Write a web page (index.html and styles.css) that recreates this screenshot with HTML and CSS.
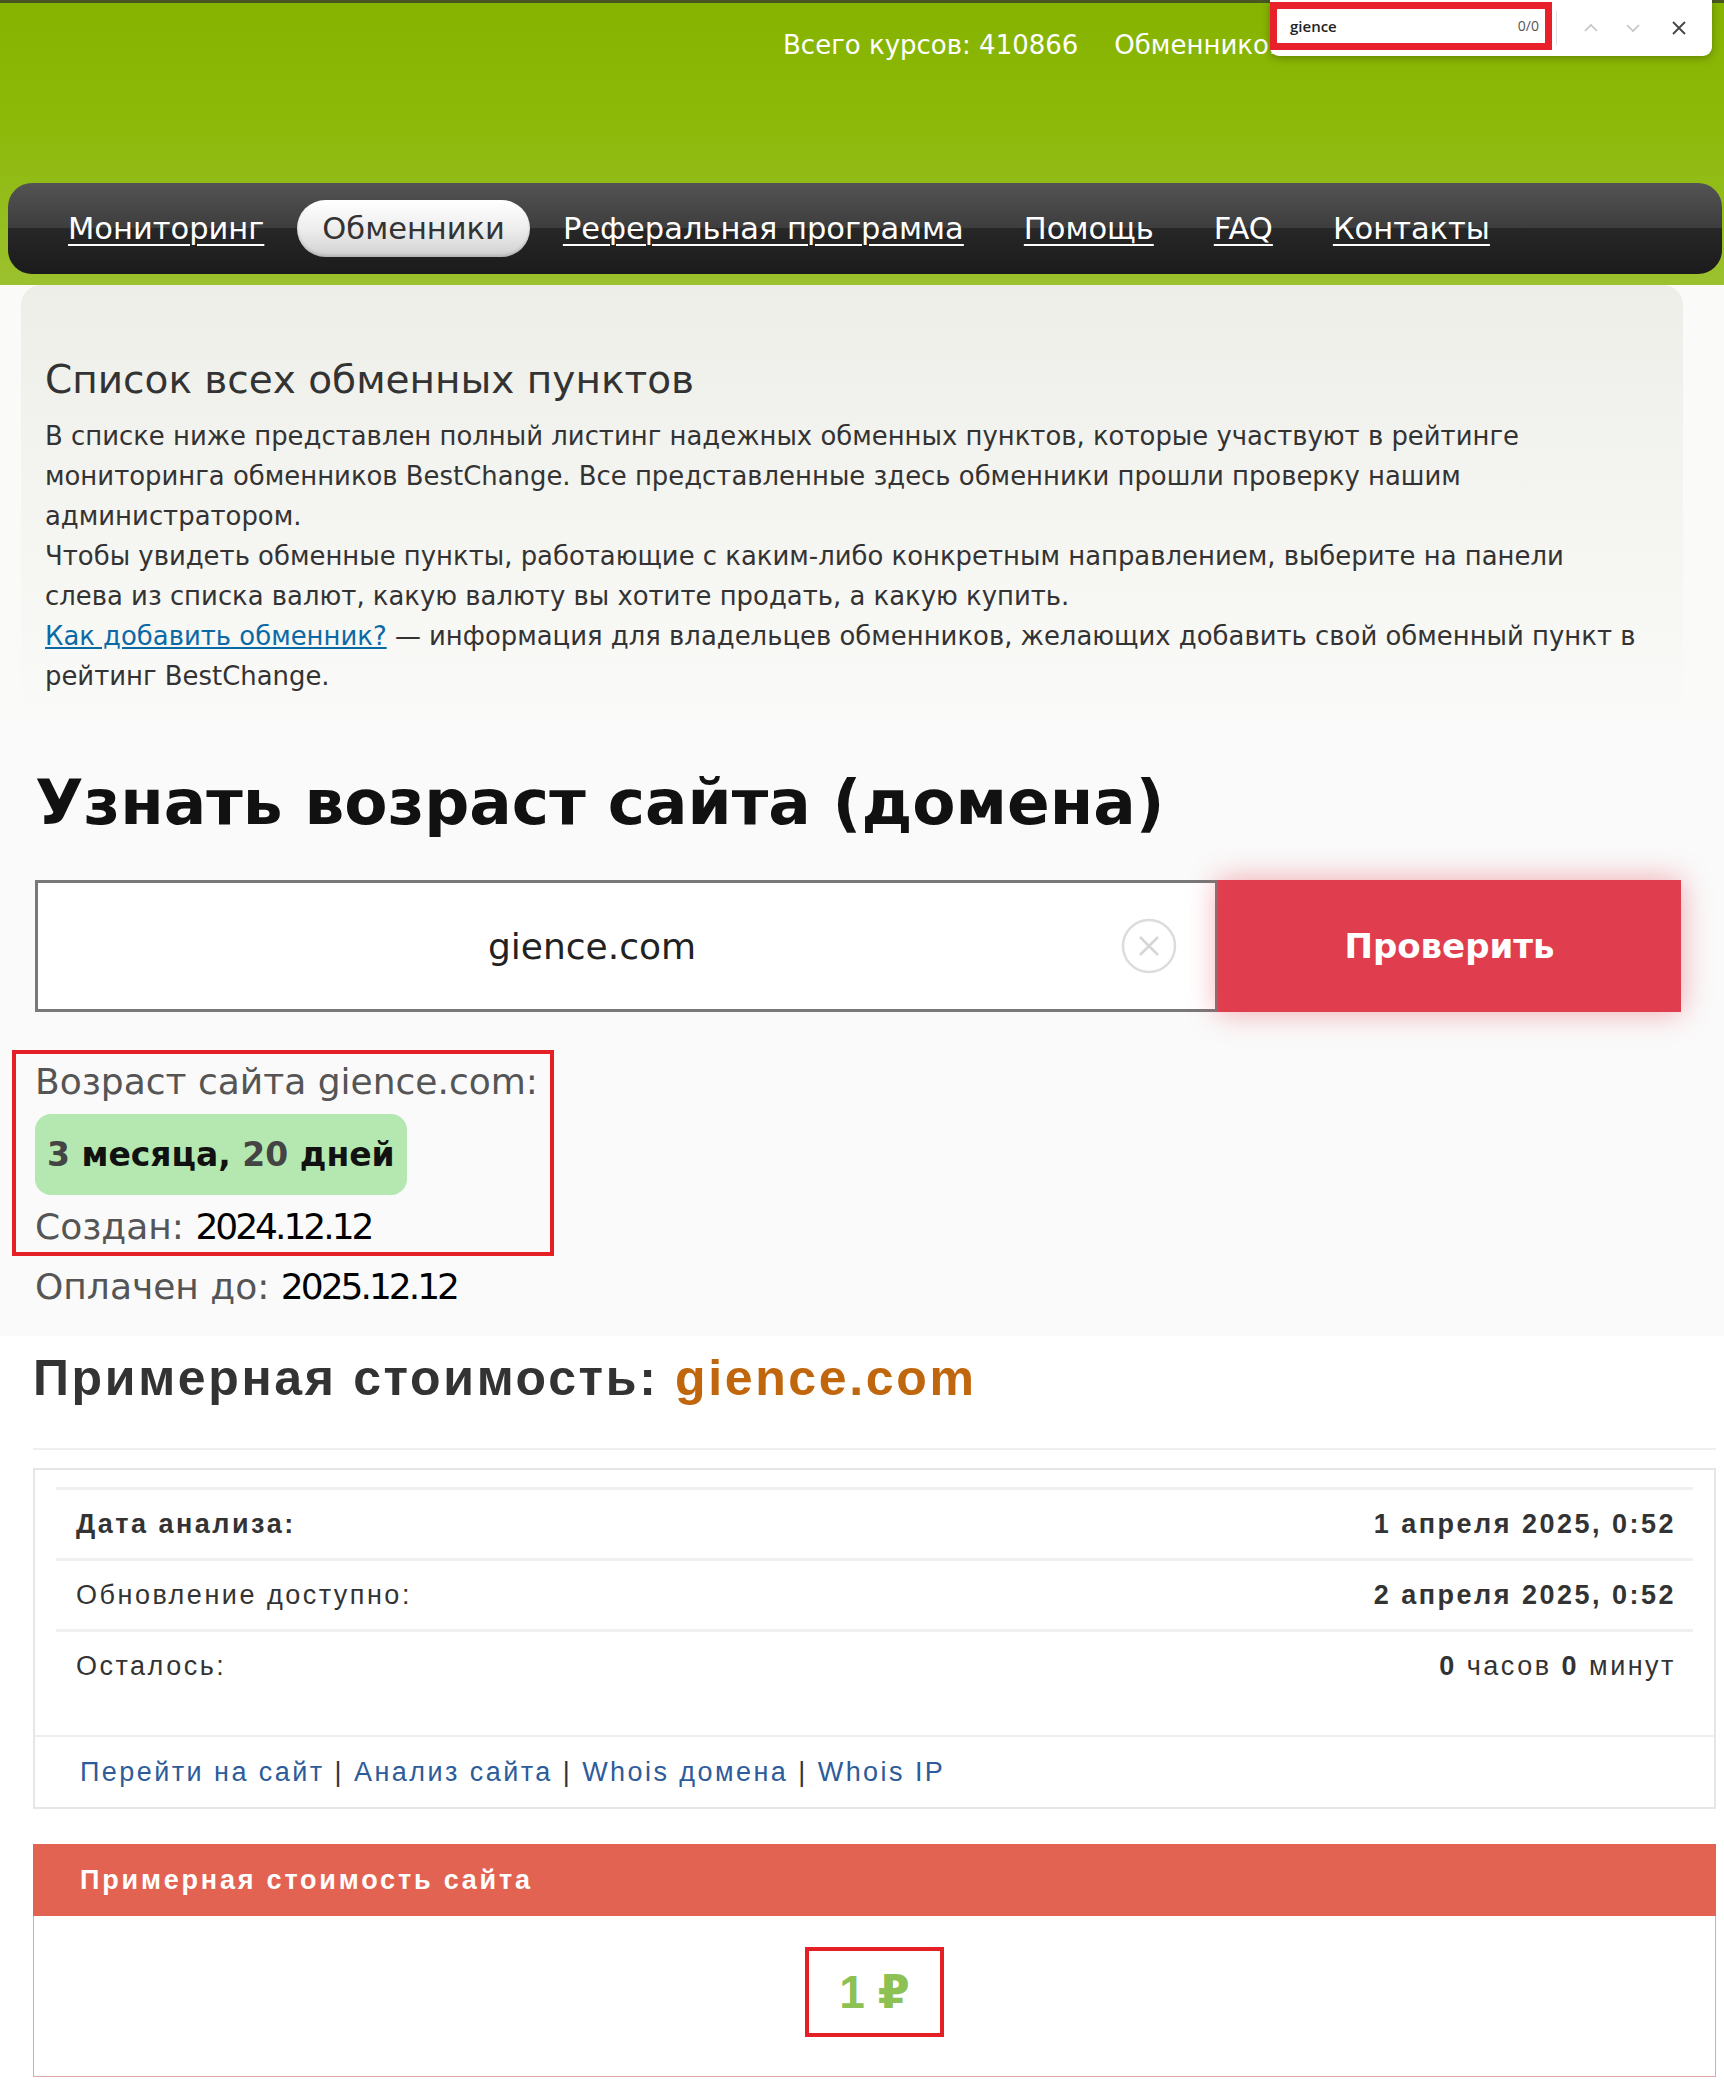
FILE: index.html
```html
<!DOCTYPE html>
<html lang="ru">
<head>
<meta charset="utf-8">
<title>Узнать возраст сайта (домена)</title>
<link rel="stylesheet" href="styles.css">
</head>
<body>
<header class="site-head">
  <div class="stats"><span>Всего курсов: 410866</span><span class="stats-item">Обменников: 412</span></div>
  <nav class="menu">
    <a href="#" class="menu-item">Мониторинг</a>
    <a href="#" class="menu-item active">Обменники</a>
    <a href="#" class="menu-item">Реферальная программа</a>
    <a href="#" class="menu-item">Помощь</a>
    <a href="#" class="menu-item">FAQ</a>
    <a href="#" class="menu-item">Контакты</a>
  </nav>
</header>

<div class="find-bar">
  <div class="find-field"><span class="find-text">gience</span><span class="find-count">0/0</span></div>
  <span class="find-sep"></span>
  <svg class="find-icon" width="16" height="10" viewBox="0 0 16 10"><polyline points="2,8 8,2 14,8" fill="none" stroke="#c4c4c4" stroke-width="1.6"/></svg>
  <svg class="find-icon" width="16" height="10" viewBox="0 0 16 10"><polyline points="2,2 8,8 14,2" fill="none" stroke="#c4c4c4" stroke-width="1.6"/></svg>
  <svg class="find-icon find-close" width="14" height="14" viewBox="0 0 14 14"><path d="M1 1 L13 13 M13 1 L1 13" stroke="#444" stroke-width="1.8"/></svg>
</div>

<div class="info-wrap">
  <section class="info">
    <h1>Список всех обменных пунктов</h1>
    <p>В списке ниже представлен полный листинг надежных обменных пунктов, которые участвуют в рейтинге мониторинга обменников BestChange. Все представленные здесь обменники прошли проверку нашим администратором.<br>Чтобы увидеть обменные пункты, работающие с каким-либо конкретным направлением, выберите на панели слева из списка валют, какую валюту вы хотите продать, а какую купить.<br><a href="#">Как добавить обменник?</a> — информация для владельцев обменников, желающих добавить свой обменный пункт в рейтинг BestChange.</p>
  </section>
</div>

<section class="age">
  <h2>Узнать возраст сайта (домена)</h2>
  <form class="check" action="#">
    <div class="field">
      <input class="field-input" type="text" value="gience.com">
      <svg class="clear" width="58" height="58" viewBox="0 0 58 58"><circle cx="29" cy="29" r="26" fill="none" stroke="#dcdcdc" stroke-width="2.5"/><path d="M20 20 L38 38 M38 20 L20 38" stroke="#d6d6d6" stroke-width="2.5"/></svg>
    </div>
    <button class="check-btn" type="button">Проверить</button>
  </form>
  <div class="age-box">
    <div class="age-line">Возраст сайта gience.com:</div>
    <div class="age-pill"><span class="num">3</span> месяца, <span class="num">20</span> дней</div>
    <div class="age-line">Создан: <span class="val">2024.12.12</span></div>
  </div>
  <div class="age-line paid">Оплачен до: <span class="val">2025.12.12</span></div>
</section>

<section class="cost">
  <h2 class="cost-title">Примерная стоимость: <span class="domain">gience.com</span></h2>
  <div class="rule"></div>
  <div class="stat-box">
    <div class="rows">
      <div class="row"><b>Дата анализа:</b><b>1 апреля 2025, 0:52</b></div>
      <div class="row"><span>Обновление доступно:</span><b>2 апреля 2025, 0:52</b></div>
      <div class="row"><span>Осталось:</span><span><b>0</b> часов <b>0</b> минут</span></div>
    </div>
    <div class="links"><a href="#">Перейти на сайт</a>&nbsp;|&nbsp;<a href="#">Анализ сайта</a>&nbsp;|&nbsp;<a href="#">Whois домена</a>&nbsp;|&nbsp;<a href="#">Whois IP</a></div>
  </div>
  <div class="price-card">
    <div class="price-head">Примерная стоимость сайта</div>
    <div class="price-body"><span class="price">1 ₽</span></div>
  </div>
</section>
</body>
</html>
```
FILE: styles.css
```css
* { box-sizing: border-box; }

body {
  margin: 0;
  background: #ffffff;
  font-family: "DejaVu Sans", Verdana, sans-serif;
  color: #333;
}

/* ---------- header ---------- */
.site-head {
  background: linear-gradient(#86b300 0%, #8db90a 45%, #9cc12f 100%);
  border-top: 3px solid #4a5622;
  padding: 0 2px 11px 8px;
}

.stats {
  padding: 25px 0 0 775px;
  line-height: 34px;
  font-size: 26px;
  color: #fff;
  white-space: nowrap;
}

.stats-item { margin-left: 36px; }

.menu {
  margin-top: 121px;
  height: 91px;
  display: flex;
  align-items: center;
  padding-left: 30px;
  border-radius: 24px;
  background: linear-gradient(#535353 0%, #3d3d3d 50%, #272727 50%, #1b1b1b 100%);
}

.menu-item {
  padding: 0 30px;
  color: #fff;
  font-size: 30.5px;
  text-decoration: underline;
  text-decoration-thickness: 2px;
  text-underline-offset: 5px;
  white-space: nowrap;
}

.menu-item.active {
  margin: 0 3px;
  padding: 0 25px;
  height: 57px;
  line-height: 57px;
  border-radius: 30px;
  color: #333;
  text-decoration: none;
  background: linear-gradient(#ffffff 0%, #eeeeee 50%, #d0d0d0 100%);
  box-shadow: inset 0 -2px 3px rgba(0,0,0,0.15);
}

/* ---------- browser find bar (overlay) ---------- */
.find-bar {
  position: absolute;
  top: 0;
  left: 1270px;
  width: 442px;
  height: 56px;
  background: #fff;
  border-radius: 0 0 9px 9px;
  box-shadow: 0 2px 8px rgba(0,0,0,0.28);
  display: flex;
  align-items: center;
  font-family: "Open Sans", "DejaVu Sans", sans-serif;
}

.find-field {
  width: 282px;
  height: 48px;
  margin-top: -5px;
  border: 7px solid #e8202a;
  display: flex;
  align-items: center;
  justify-content: space-between;
  padding: 0 6px 0 13px;
}

.find-text { font-size: 15px; font-weight: 600; color: #222; }
.find-count { font-size: 14px; color: #555; }

.find-sep {
  width: 1px;
  height: 34px;
  margin-left: 4px;
  background: #dde2ea;
}

.find-icon { margin-left: 26px; }
.find-close { margin-left: 31px; }

/* ---------- info panel ---------- */
.info-wrap { background: #fafaf8; }

.info {
  margin: 0 41px 0 21px;
  padding: 71px 42px 24px 24px;
  border-radius: 20px 20px 0 0;
  background: linear-gradient(#eeeee9 0%, #fafaf8 100%);
}

.info h1 {
  margin: 0;
  font-size: 39px;
  font-weight: normal;
  line-height: 48px;
  color: #333;
}

.info p {
  margin: 12px 0 0;
  font-size: 25.9px;
  line-height: 40px;
  color: #333;
}

.info a { color: #0b6aa6; }

/* ---------- domain age ---------- */
.age {
  background: #fafafa;
  padding: 43px 43px 27px 35px;
}

.age h2 {
  margin: 0;
  font-size: 63px;
  font-weight: bold;
  line-height: 80px;
  color: #111;
}

.check {
  margin-top: 37px;
  display: flex;
  height: 132px;
}

.field {
  flex: 1;
  display: flex;
  align-items: center;
  border: 3px solid #787878;
  background: #fff;
}

.field-input {
  flex: 1;
  min-width: 0;
  height: 100%;
  border: 0;
  outline: none;
  background: transparent;
  text-align: center;
  padding: 0 0 0 26px;
  font-family: "DejaVu Sans", sans-serif;
  font-size: 36px;
  color: #222;
}

.clear { margin-right: 37px; flex: none; }

.check-btn {
  width: 463px;
  border: 0;
  background: #e03e4e;
  color: #fff;
  font-family: "DejaVu Sans", sans-serif;
  font-size: 34px;
  font-weight: bold;
  box-shadow: 0 0 28px rgba(228, 60, 76, 0.45);
}

.age-box {
  width: 542px;
  margin: 38px 0 0 -23px;
  border: 4px solid #e41f26;
  padding: 6px 8px 3px 19px;
  display: flex;
  flex-direction: column;
  align-items: flex-start;
}

.age-line {
  font-size: 36px;
  line-height: 44px;
  color: #555;
  white-space: nowrap;
}

.age-line .val { color: #000; letter-spacing: -3px; }

.age-pill {
  margin: 10px 0;
  height: 81px;
  line-height: 81px;
  padding: 0 12px;
  border-radius: 16px;
  background: #b4e8b0;
  font-size: 33px;
  font-weight: bold;
  color: #111;
  white-space: nowrap;
}

.age-pill .num { color: #444; }

.paid { margin-top: 9px; }

/* ---------- cost ---------- */
.cost {
  padding: 12px 8px 0 33px;
  font-family: "Liberation Sans", Arial, sans-serif;
}

.cost-title {
  margin: 0;
  font-size: 50px;
  line-height: 60px;
  letter-spacing: 2.65px;
  font-weight: bold;
  color: #333;
}

.domain { color: #c0660c; }

.rule {
  height: 2px;
  margin-top: 40px;
  background: #efefef;
}

.stat-box {
  margin-top: 18px;
  border: 2px solid #e6e6e6;
}

.rows { padding: 17px 21px 35px; }

.row {
  height: 71px;
  display: flex;
  align-items: center;
  justify-content: space-between;
  border-top: 3px solid #f0f0f0;
  padding: 0 17px 0 20px;
  font-size: 27px;
  letter-spacing: 2.5px;
  color: #333;
}

.links {
  height: 72px;
  border-top: 2px solid #eeeeee;
  display: flex;
  align-items: center;
  padding-left: 45px;
  font-size: 27px;
  letter-spacing: 2.45px;
  color: #333;
}

.links a { color: #2e5c9a; text-decoration: none; }

.price-card { margin-top: 35px; }

.price-head {
  height: 72px;
  display: flex;
  align-items: center;
  padding-left: 47px;
  background: #e36352;
  color: #fff;
  font-size: 27px;
  font-weight: bold;
  letter-spacing: 2.8px;
}

.price-body {
  border: 1px solid #dcaaa3;
  border-top: 0;
  padding: 31px 0 39px;
  text-align: center;
}

.price {
  display: inline-block;
  width: 139px;
  height: 90px;
  line-height: 82px;
  border: 4px solid #e41f26;
  color: #8dc153;
  font-family: "Liberation Sans", "DejaVu Sans", sans-serif;
  font-size: 46px;
  font-weight: bold;
}
```
